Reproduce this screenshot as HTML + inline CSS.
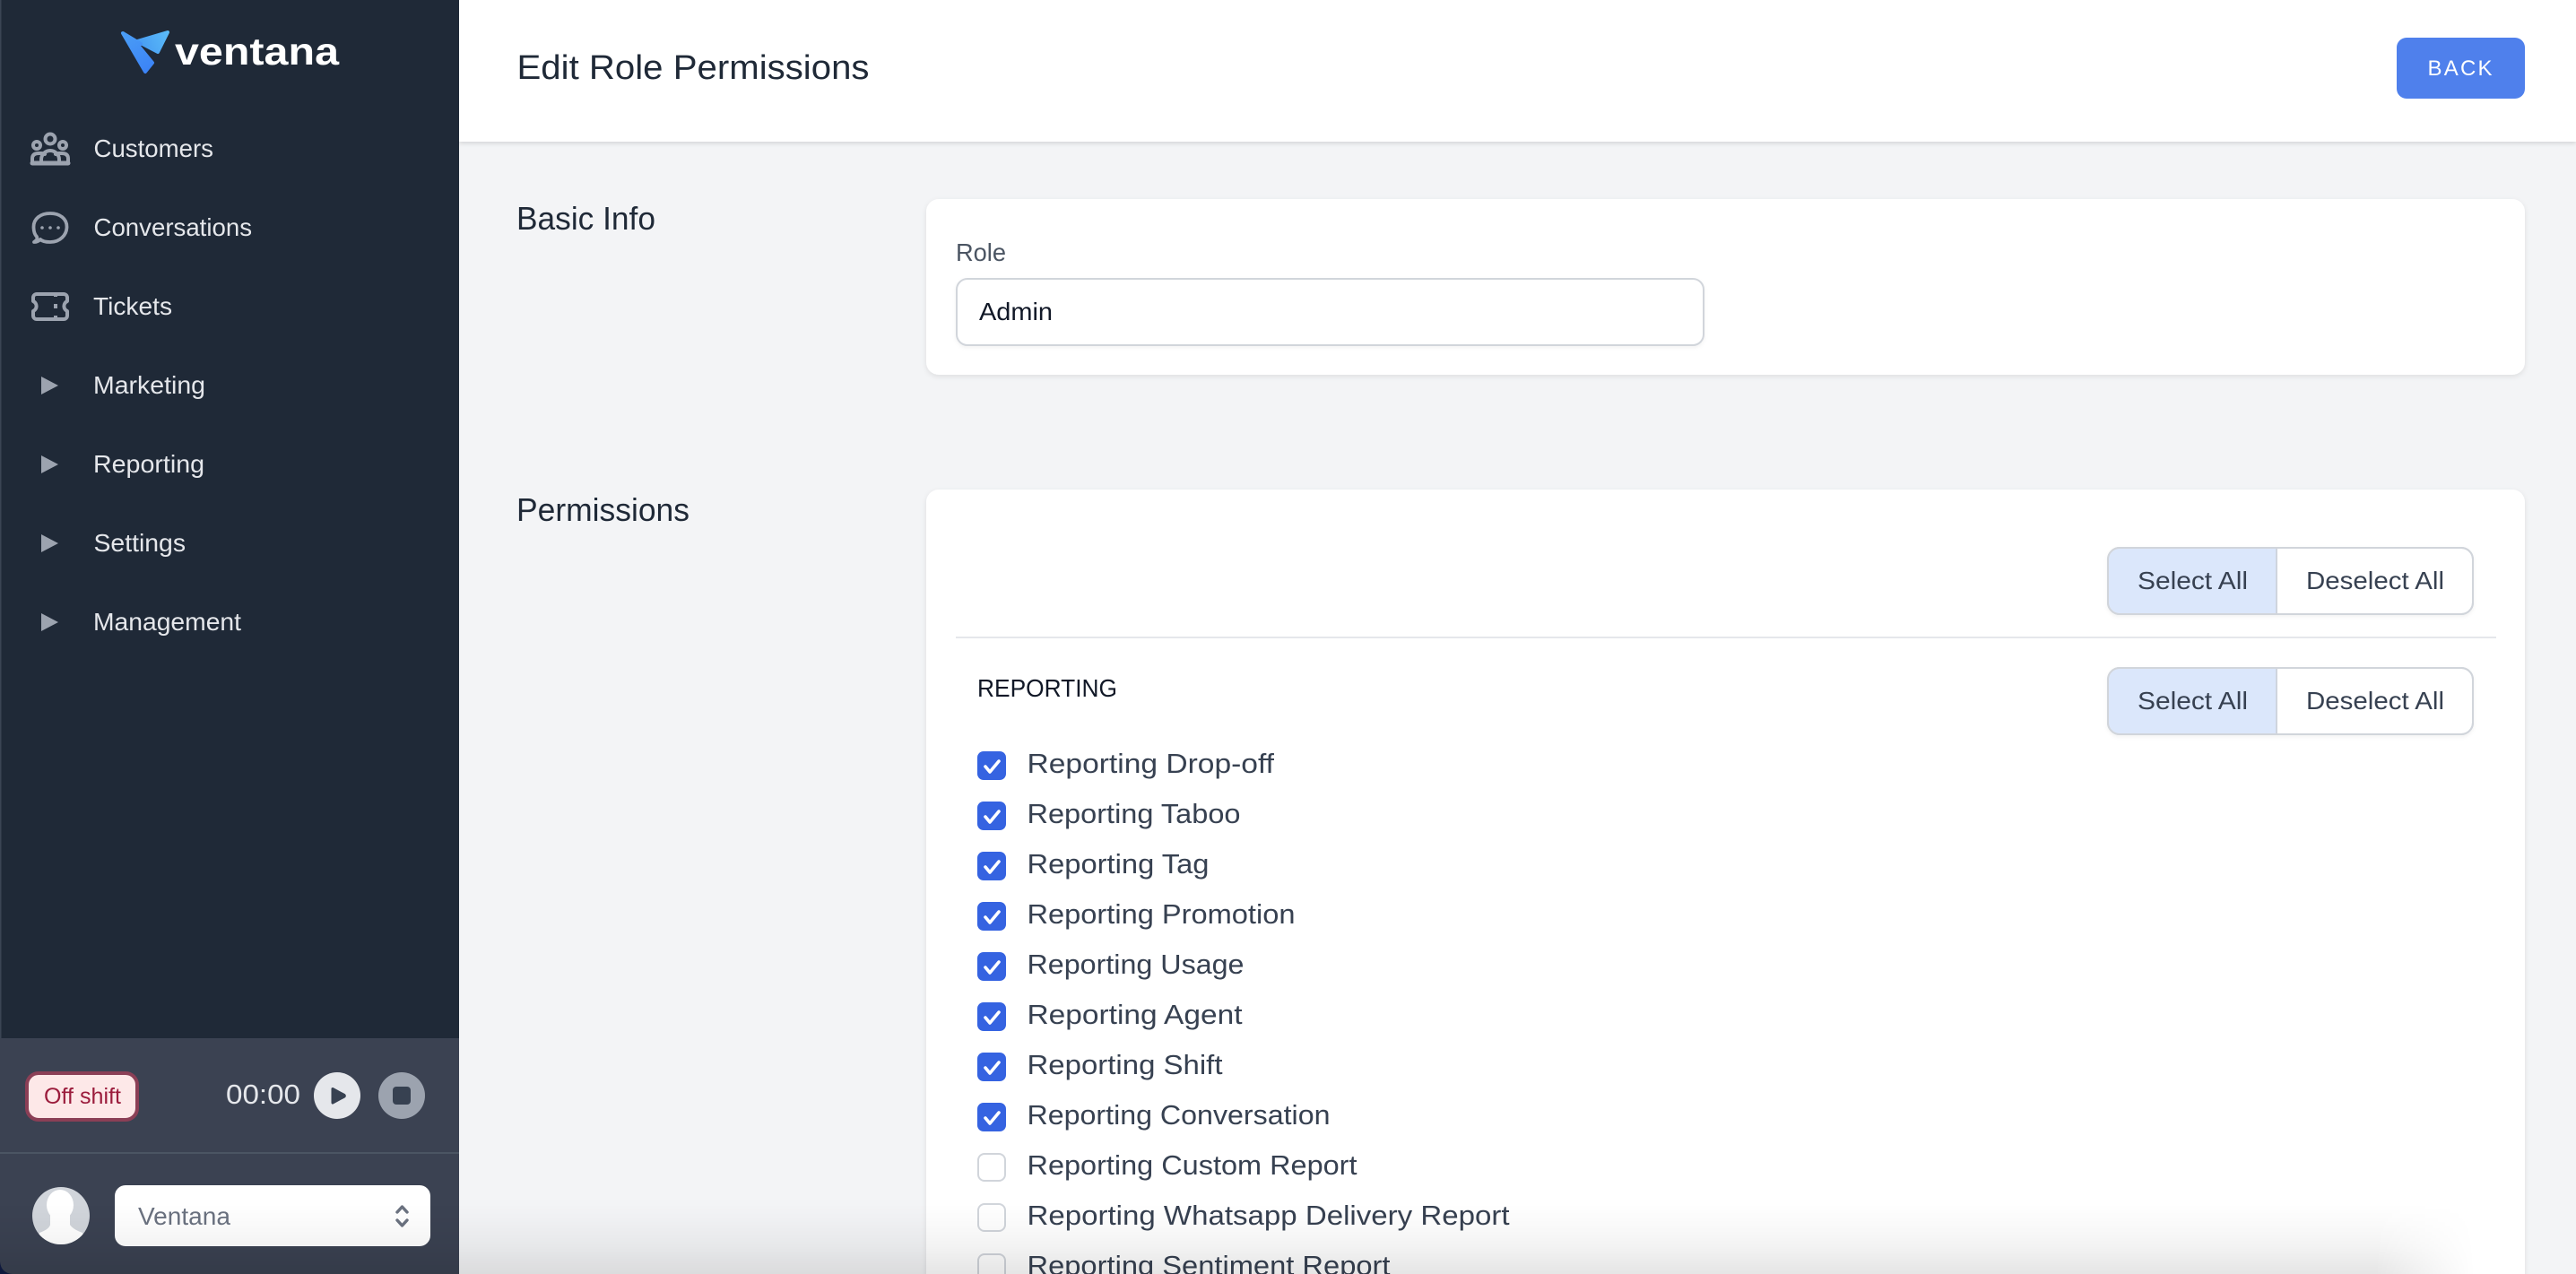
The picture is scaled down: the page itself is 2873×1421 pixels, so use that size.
<!DOCTYPE html>
<html lang="en">
<head>
<meta charset="utf-8">
<title>Edit Role Permissions</title>
<style>
html,body{margin:0;padding:0;width:2873px;height:1421px;overflow:hidden;background:#f3f4f6}
svg{display:block;position:absolute;left:0;top:0}
text{font-family:"Liberation Sans",sans-serif}
.nav{font-size:28px;fill:#e5e7eb}
.rep{font-size:31px;fill:#374151}
.btn{font-size:28px;fill:#374151}
</style>
</head>
<body>
<svg width="2873" height="1421" viewBox="0 0 2873 1421" xmlns="http://www.w3.org/2000/svg">
<defs>
<linearGradient id="lg1" gradientUnits="userSpaceOnUse" x1="140" y1="36" x2="165" y2="82"><stop offset="0" stop-color="#4a9df5"/><stop offset="1" stop-color="#3b82f6"/></linearGradient>
<linearGradient id="lg2" gradientUnits="userSpaceOnUse" x1="188" y1="36" x2="155" y2="52"><stop offset="0" stop-color="#5bbcf8"/><stop offset="1" stop-color="#479bf3"/></linearGradient>
<linearGradient id="fade" x1="0" y1="0" x2="0" y2="1">
<stop offset="0" stop-color="#000" stop-opacity="0"/>
<stop offset=".28" stop-color="#000" stop-opacity=".02"/>
<stop offset=".6" stop-color="#000" stop-opacity=".047"/>
<stop offset=".8" stop-color="#000" stop-opacity=".075"/>
<stop offset="1" stop-color="#000" stop-opacity=".1"/>
</linearGradient>
<linearGradient id="hfade" x1="0" y1="0" x2="1" y2="0">
<stop offset="0" stop-color="#fff"/><stop offset=".96" stop-color="#fff"/><stop offset="1" stop-color="#000"/>
</linearGradient>
<mask id="m1" maskUnits="userSpaceOnUse" x="0" y="1340" width="2760" height="81"><rect x="0" y="1340" width="2760" height="81" fill="url(#hfade)"/></mask>
<clipPath id="av"><circle cx="68" cy="1356" r="32"/></clipPath>
<filter id="s1" x="-2%" y="-5%" width="104%" height="110%"><feDropShadow dx="0" dy="2" stdDeviation="3" flood-color="#000" flood-opacity=".09"/></filter>
<filter id="s2" x="-2%" y="-30%" width="104%" height="170%"><feDropShadow dx="0" dy="2" stdDeviation="2.5" flood-color="#000" flood-opacity=".13"/></filter>
<filter id="s3" x="-3%" y="-10%" width="106%" height="125%"><feDropShadow dx="0" dy="2" stdDeviation="2" flood-color="#000" flood-opacity=".05"/></filter>
</defs>

<!-- main background -->
<rect width="2873" height="1421" fill="#f3f4f6"/>

<!-- header -->
<rect x="512" y="0" width="2361" height="158" fill="#fff" filter="url(#s2)"/>
<text x="576.500" y="88" font-size="38" fill="#1f2937" textLength="393" lengthAdjust="spacingAndGlyphs">Edit Role Permissions</text>
<rect x="2673" y="42" width="143" height="68" rx="11" fill="#4f80ec"/>
<text x="2707.500" y="84" font-size="24" fill="#fff" textLength="72" lengthAdjust="spacing">BACK</text>

<!-- basic info -->
<text x="576" y="256" font-size="36" fill="#1f2937" textLength="155" lengthAdjust="spacingAndGlyphs">Basic Info</text>
<rect x="1033" y="222" width="1783" height="196" rx="14" fill="#fff" filter="url(#s1)"/>
<text x="1066" y="291" font-size="28" fill="#4b5563" textLength="56" lengthAdjust="spacingAndGlyphs">Role</text>
<rect x="1067" y="311" width="833" height="74" rx="12" fill="#fff" stroke="#d1d5db" stroke-width="2" filter="url(#s3)"/>
<text x="1092" y="357" font-size="28" fill="#111827" textLength="82" lengthAdjust="spacingAndGlyphs">Admin</text>

<!-- permissions -->
<text x="576" y="581" font-size="36" fill="#1f2937" textLength="193" lengthAdjust="spacingAndGlyphs">Permissions</text>
<rect x="1033" y="546" width="1783" height="900" rx="14" fill="#fff" filter="url(#s1)"/>

<!-- button groups -->
<g>
<rect x="2351" y="611" width="407" height="74" rx="13" fill="#fff" stroke="#d1d5db" stroke-width="2" filter="url(#s3)"/>
<path d="M2538 612H2364a12 12 0 0 0-12 12V672a12 12 0 0 0 12 12H2538Z" fill="#dbe7fb"/>
<rect x="2351" y="611" width="407" height="74" rx="13" fill="none" stroke="#d1d5db" stroke-width="2"/>
<rect x="2538" y="612" width="2" height="72" fill="#cfd5de"/>
<text class="btn" x="2384" y="657" textLength="123" lengthAdjust="spacingAndGlyphs">Select All</text>
<text class="btn" x="2572" y="657" textLength="154" lengthAdjust="spacingAndGlyphs">Deselect All</text>
</g>
<rect x="1066" y="710" width="1718" height="2" fill="#e5e7eb"/>
<g>
<rect x="2351" y="745" width="407" height="74" rx="13" fill="#fff" stroke="#d1d5db" stroke-width="2" filter="url(#s3)"/>
<path d="M2538 746H2364a12 12 0 0 0-12 12V806a12 12 0 0 0 12 12H2538Z" fill="#dbe7fb"/>
<rect x="2351" y="745" width="407" height="74" rx="13" fill="none" stroke="#d1d5db" stroke-width="2"/>
<rect x="2538" y="746" width="2" height="72" fill="#cfd5de"/>
<text class="btn" x="2384" y="791" textLength="123" lengthAdjust="spacingAndGlyphs">Select All</text>
<text class="btn" x="2572" y="791" textLength="154" lengthAdjust="spacingAndGlyphs">Deselect All</text>
</g>

<text x="1090" y="777" font-size="28" fill="#111827" textLength="156" lengthAdjust="spacingAndGlyphs">REPORTING</text>

<!-- checked rows -->
<g fill="#3563e1">
<rect x="1090" y="838" width="32" height="32" rx="7"/>
<rect x="1090" y="894" width="32" height="32" rx="7"/>
<rect x="1090" y="950" width="32" height="32" rx="7"/>
<rect x="1090" y="1006" width="32" height="32" rx="7"/>
<rect x="1090" y="1062" width="32" height="32" rx="7"/>
<rect x="1090" y="1118" width="32" height="32" rx="7"/>
<rect x="1090" y="1174" width="32" height="32" rx="7"/>
<rect x="1090" y="1230" width="32" height="32" rx="7"/>
</g>
<g fill="none" stroke="#fff" stroke-width="3.600" stroke-linecap="round" stroke-linejoin="round">
<path d="M1099 855l5 6 10-12"/>
<path d="M1099 911l5 6 10-12"/>
<path d="M1099 967l5 6 10-12"/>
<path d="M1099 1023l5 6 10-12"/>
<path d="M1099 1079l5 6 10-12"/>
<path d="M1099 1135l5 6 10-12"/>
<path d="M1099 1191l5 6 10-12"/>
<path d="M1099 1247l5 6 10-12"/>
</g>
<g fill="#fff" stroke="#d1d5db" stroke-width="2">
<rect x="1091" y="1287" width="30" height="30" rx="7"/>
<rect x="1091" y="1343" width="30" height="30" rx="7"/>
<rect x="1091" y="1399" width="30" height="30" rx="7"/>
</g>
<text class="rep" x="1145.500" y="862" textLength="275.500" lengthAdjust="spacingAndGlyphs">Reporting Drop-off</text>
<text class="rep" x="1145.500" y="918" textLength="238" lengthAdjust="spacingAndGlyphs">Reporting Taboo</text>
<text class="rep" x="1145.500" y="974" textLength="203" lengthAdjust="spacingAndGlyphs">Reporting Tag</text>
<text class="rep" x="1145.500" y="1030" textLength="299" lengthAdjust="spacingAndGlyphs">Reporting Promotion</text>
<text class="rep" x="1145.500" y="1086" textLength="242" lengthAdjust="spacingAndGlyphs">Reporting Usage</text>
<text class="rep" x="1145.500" y="1142" textLength="240" lengthAdjust="spacingAndGlyphs">Reporting Agent</text>
<text class="rep" x="1145.500" y="1198" textLength="218" lengthAdjust="spacingAndGlyphs">Reporting Shift</text>
<text class="rep" x="1145.500" y="1254" textLength="338" lengthAdjust="spacingAndGlyphs">Reporting Conversation</text>
<text class="rep" x="1145.500" y="1310" textLength="368" lengthAdjust="spacingAndGlyphs">Reporting Custom Report</text>
<text class="rep" x="1145.500" y="1366" textLength="538" lengthAdjust="spacingAndGlyphs">Reporting Whatsapp Delivery Report</text>
<text class="rep" x="1145.500" y="1422" textLength="405" lengthAdjust="spacingAndGlyphs">Reporting Sentiment Report</text>

<!-- sidebar -->
<rect x="0" y="0" width="512" height="1421" fill="#1f2937"/>
<rect x="0" y="0" width="1.500" height="1158" fill="#3a4453"/>
<rect x="0" y="1158" width="512" height="263" fill="#3b4252"/>
<rect x="0" y="1285" width="512" height="2" fill="#4b5563"/>
<path d="M0 1407V1421H14Q1 1420 0 1407Z" fill="#111c44"/>

<!-- logo -->
<polygon points="153,46 187,36 176,58" fill="url(#lg2)" stroke="url(#lg2)" stroke-width="4" stroke-linejoin="round"/>
<polygon points="137,37 157,49 152,48 170,70 162,80" fill="url(#lg1)" stroke="url(#lg1)" stroke-width="4" stroke-linejoin="round"/>
<text x="195" y="72" font-size="43" font-weight="700" fill="#fff" textLength="183" lengthAdjust="spacingAndGlyphs">ventana</text>

<!-- nav icons -->
<g fill="none" stroke="#9ca3af" stroke-width="4" stroke-linejoin="round" stroke-linecap="round">
<circle cx="56" cy="155" r="5.500"/>
<circle cx="41" cy="162" r="4"/>
<circle cx="70" cy="162" r="4"/>
<path d="M36 182V177q0-6 7-6h3q3 0 4 1"/>
<path d="M76 182V177q0-6-7-6h-3q-3 0-4 1"/>
<path d="M46 182v-4a10 10 0 0 1 20 0v4"/>
<path d="M36 182H76" stroke-width="5"/>
</g>
<path d="M38 270C41 268 42 267 41 264C38 261 37.500 257 37.500 253C37.500 244 45 238 56 238C67 238 74.500 244 74.500 253C74.500 262 67 270 56 270C51 270 47 269 45 267C43 269 41 270 38 270Z" fill="none" stroke="#9ca3af" stroke-width="3.800" stroke-linejoin="round"/>
<g fill="#9ca3af"><circle cx="47" cy="254" r="1.800"/><circle cx="56" cy="254" r="1.800"/><circle cx="65" cy="254" r="1.800"/></g>
<path d="M41 328H71a4 4 0 0 1 4 4V336a6 6 0 0 0 0 11V352a4 4 0 0 1-4 4H41a4 4 0 0 1-4-4V347a6 6 0 0 0 0-11V332a4 4 0 0 1 4-4Z" fill="none" stroke="#9ca3af" stroke-width="4" stroke-linejoin="round"/>
<path d="M62 327v4M62 339v5M62 352v4" stroke="#9ca3af" stroke-width="4"/>

<!-- nav text -->
<text class="nav" x="104.500" y="175" textLength="133.500" lengthAdjust="spacingAndGlyphs">Customers</text>
<text class="nav" x="104.500" y="263" textLength="176.500" lengthAdjust="spacingAndGlyphs">Conversations</text>
<text class="nav" x="104" y="351" textLength="88" lengthAdjust="spacingAndGlyphs">Tickets</text>
<text class="nav" x="104" y="439" textLength="125" lengthAdjust="spacingAndGlyphs">Marketing</text>
<text class="nav" x="104" y="527" textLength="124" lengthAdjust="spacingAndGlyphs">Reporting</text>
<text class="nav" x="104.500" y="615" textLength="102.500" lengthAdjust="spacingAndGlyphs">Settings</text>
<text class="nav" x="104" y="703" textLength="165" lengthAdjust="spacingAndGlyphs">Management</text>
<g fill="#9ca3af">
<polygon points="46,420 65,430 46,440"/>
<polygon points="46,508 65,518 46,528"/>
<polygon points="46,596 65,606 46,616"/>
<polygon points="46,684 65,694 46,704"/>
</g>

<!-- shift row -->
<rect x="30" y="1197" width="123" height="52" rx="13" fill="#fde8e8" stroke="#8b3f56" stroke-width="4"/>
<text x="49" y="1231" font-size="25" fill="#9b1c3c" textLength="86" lengthAdjust="spacingAndGlyphs">Off shift</text>
<text x="252" y="1231" font-size="31" fill="#e5e7eb" textLength="83" lengthAdjust="spacingAndGlyphs">00:00</text>
<circle cx="376" cy="1222" r="26" fill="#e5e7eb"/>
<path d="M371 1214.500L384 1221.500a1 1 0 0 1 0 1.500L371 1230Z" fill="#374151" stroke="#374151" stroke-width="3" stroke-linejoin="round"/>
<circle cx="448" cy="1222" r="26" fill="#9ca3af"/>
<rect x="438" y="1212" width="20" height="20" rx="4" fill="#374151"/>

<!-- user row -->
<circle cx="68" cy="1356" r="32" fill="#d1d5db"/>
<g clip-path="url(#av)" fill="#fff">
<ellipse cx="67" cy="1344" rx="15" ry="17"/>
<path d="M56 1352h22v14q3 5 14 9l6 22H38l6-22q11-4 12-9Z"/>
</g>
<rect x="128" y="1322" width="352" height="68" rx="12" fill="#fff"/>
<text x="154" y="1366" font-size="28" fill="#6b7280" textLength="103" lengthAdjust="spacingAndGlyphs">Ventana</text>
<path d="M443 1352l5.500-6 5.500 6M443 1361l5.500 6 5.500-6" fill="none" stroke="#6b7280" stroke-width="3.400" stroke-linecap="round" stroke-linejoin="round"/>

<!-- bottom shadow -->
<rect x="0" y="1343" width="2760" height="78" fill="url(#fade)" mask="url(#m1)"/>
</svg>
</body>
</html>
